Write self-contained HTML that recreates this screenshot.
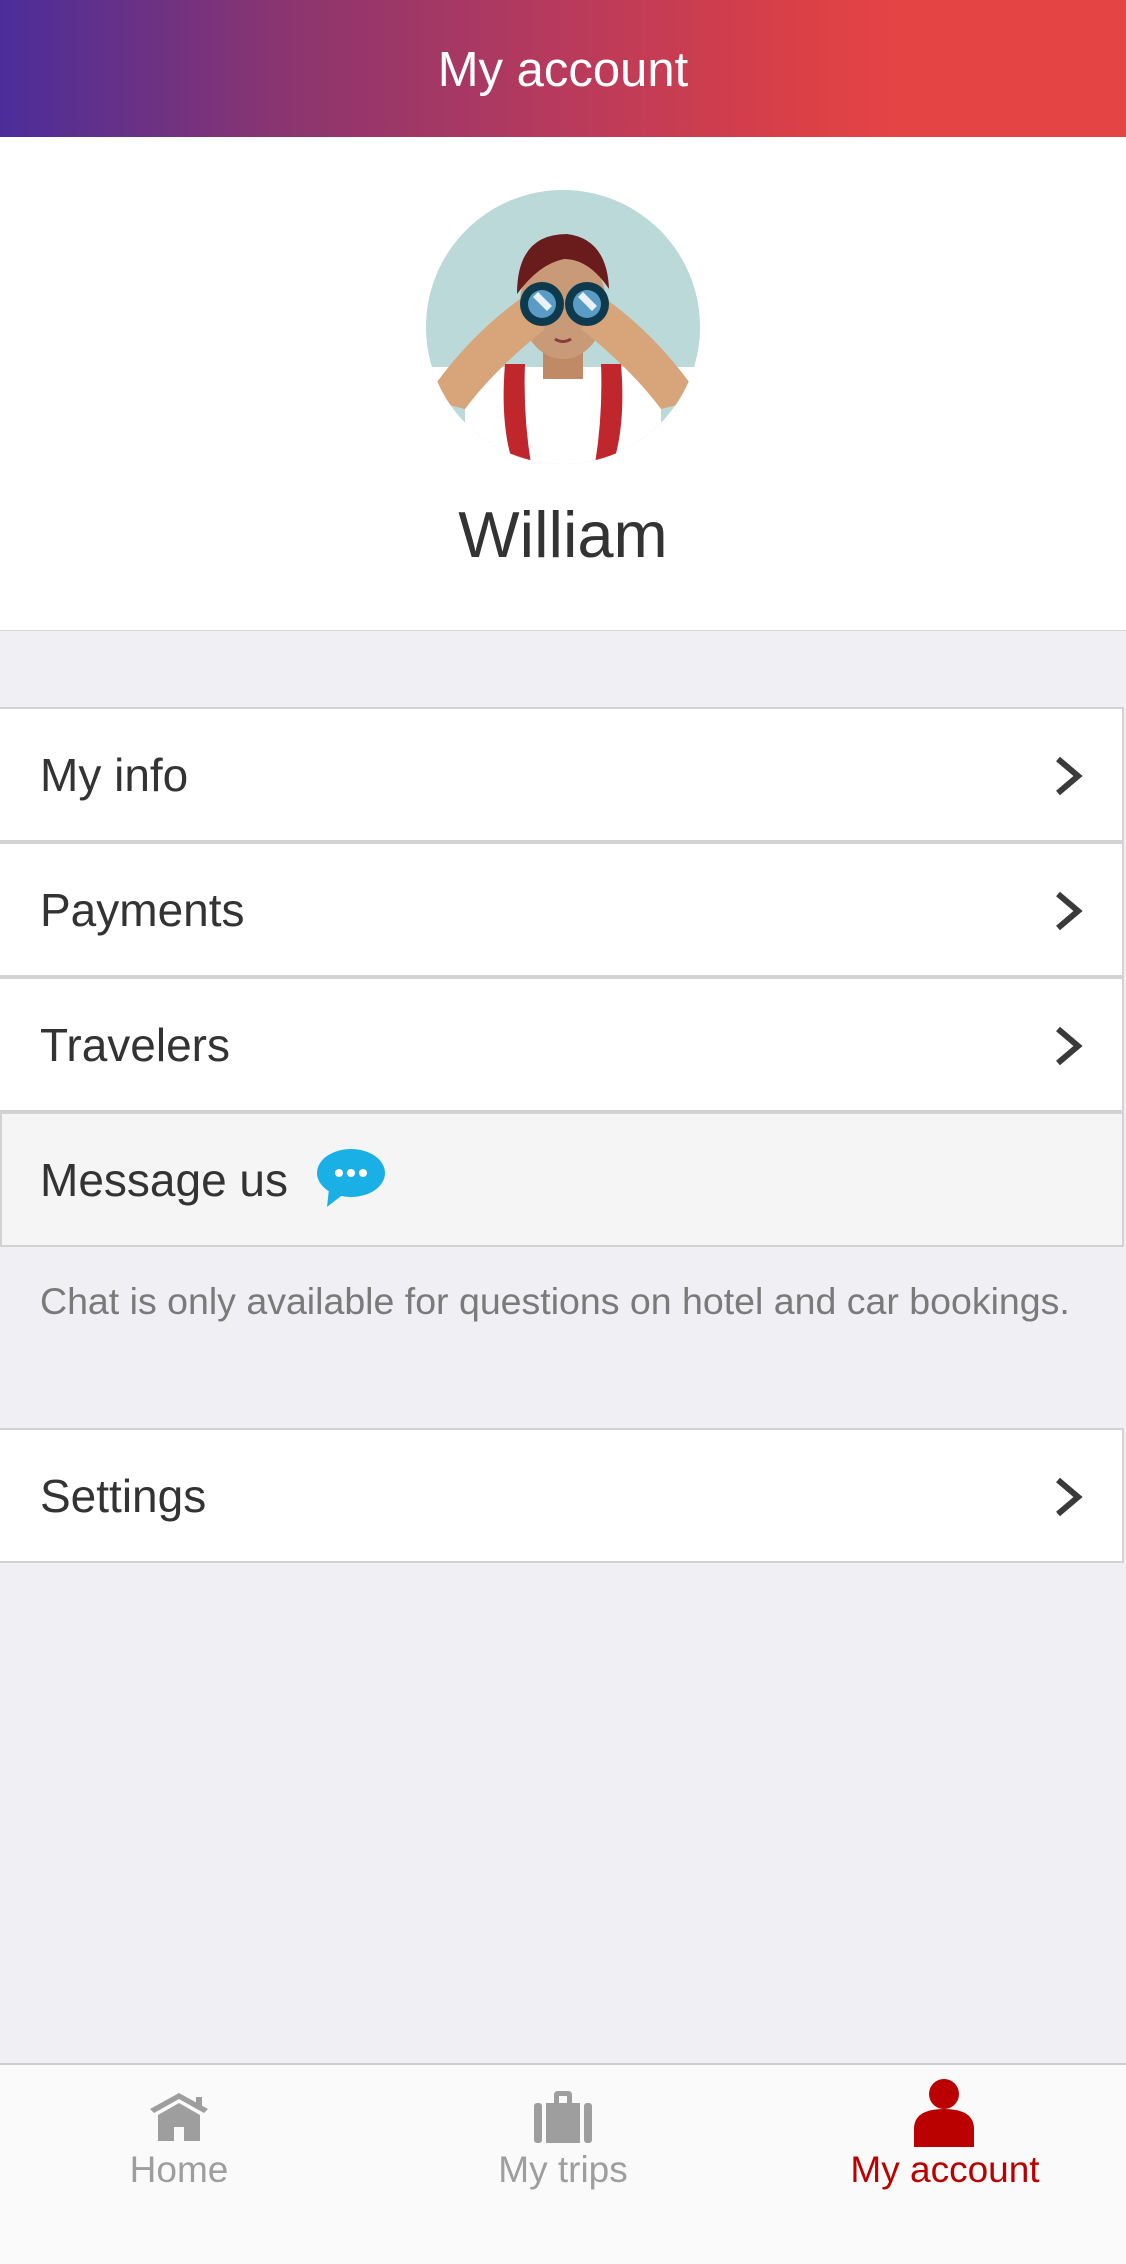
<!DOCTYPE html>
<html><head><meta charset="utf-8"><style>
*{margin:0;padding:0;box-sizing:border-box}
body{width:1126px;height:2264px;background:#efeff4;font-family:"Liberation Sans",sans-serif;position:relative;overflow:hidden}
.hdr{position:absolute;left:0;top:0;width:1126px;height:137px;background:linear-gradient(90deg,#4b2d9a 0%,#8a3570 25%,#b83a5c 50%,#d93f48 70%,#e54444 80%,#e54444 100%);color:#fff;font-size:49px;text-align:center;line-height:140px}
.prof{position:absolute;left:0;top:137px;width:1126px;height:494px;background:#fff;border-bottom:1px solid #d4d4d8}
.name{position:absolute;left:0;width:1126px;top:360px;text-align:center;font-size:65px;color:#333}
.row{position:absolute;left:0;width:1124px;height:135px;background:#fff;border:2px solid #d2d2d2;border-left:none;font-size:46px;color:#333;padding-left:40px;line-height:133px}
.chev{position:absolute;left:1054px;top:46px}
.note{position:absolute;left:40px;top:1280px;font-size:37.5px;color:#7a7a7a}
.nav{position:absolute;left:0;top:2063px;width:1126px;height:201px;background:#fafafa;border-top:2px solid #cdcdd0}
.lbl{position:absolute;top:84px;font-size:37px;color:#9e9e9e;text-align:center;width:400px}
</style></head><body>
<div class="hdr">My account</div>
<div class="prof">
<svg style="position:absolute;left:425px;top:52px" width="276" height="276" viewBox="0 0 276 276">
<defs><clipPath id="c"><circle cx="138" cy="138" r="137"/></clipPath></defs>
<circle cx="138" cy="138" r="137" fill="#bad9d8"/>
<g clip-path="url(#c)">
<rect x="0" y="178" width="276" height="100" fill="#fff"/>
<rect x="0" y="210" width="40" height="70" fill="#bad9d8"/><rect x="236" y="210" width="40" height="70" fill="#bad9d8"/>
<path d="M80 175 q-5 60 8 100 l18 0 q-8-50 -6-100z" fill="#c0272d"/>
<path d="M196 175 q5 60 -8 100 l-18 0 q8-50 6-100z" fill="#c0272d"/>
<rect x="118" y="150" width="40" height="40" fill="#c08a66"/>
<ellipse cx="138" cy="115" rx="43" ry="55" fill="#c89a78"/>
<path d="M92 105 q0-60 50-60 q40 5 42 55 q-20-30 -45-30 q-25 5-47 35z" fill="#6a1c1c"/>
<path d="M0 210 q40-60 95-100 l25 30 q-50 40 -80 80 z" fill="#d8a47a"/>
<path d="M276 210 q-40-60 -95-100 l-25 30 q50 40 80 80 z" fill="#d8a47a"/>
<circle cx="117" cy="115" r="22" fill="#0e3a4d"/><circle cx="162" cy="115" r="22" fill="#0e3a4d"/>
<circle cx="117" cy="115" r="14" fill="#5b9cc7"/><circle cx="162" cy="115" r="14" fill="#5b9cc7"/>
<path d="M108 108 l14 14 l5 -5 l-14-14z" fill="#e8f2f8"/><path d="M153 108 l14 14 l5 -5 l-14-14z" fill="#e8f2f8"/>
<path d="M130 150 q8 5 16 0" stroke="#8a3c3c" stroke-width="3" fill="none"/>
</g></svg>
<div class="name">William</div>
</div>
<div class="row" style="top:707px">My info<svg class="chev" width="30" height="42" viewBox="0 0 30 42"><path d="M4 4 L24 21 L4 38" stroke="#3a3a3a" stroke-width="6" fill="none"/></svg></div>
<div class="row" style="top:842px">Payments<svg class="chev" width="30" height="42" viewBox="0 0 30 42"><path d="M4 4 L24 21 L4 38" stroke="#3a3a3a" stroke-width="6" fill="none"/></svg></div>
<div class="row" style="top:977px">Travelers<svg class="chev" width="30" height="42" viewBox="0 0 30 42"><path d="M4 4 L24 21 L4 38" stroke="#3a3a3a" stroke-width="6" fill="none"/></svg></div>
<div class="row" style="top:1112px;background:#f5f5f5;border-left:2px solid #d2d2d2;padding-left:38px">Message us
<svg style="position:absolute;left:313px;top:35px" width="72" height="60" viewBox="0 0 72 60"><ellipse cx="36" cy="24" rx="34" ry="24" fill="#1ab0e6"/><path d="M14 40 L12 58 L30 44z" fill="#1ab0e6"/><circle cx="24" cy="24" r="4" fill="#fff"/><circle cx="36" cy="24" r="4" fill="#fff"/><circle cx="48" cy="24" r="4" fill="#fff"/></svg></div>
<div class="note">Chat is only available for questions on hotel and car bookings.</div>
<div class="row" style="top:1428px">Settings<svg class="chev" width="30" height="42" viewBox="0 0 30 42"><path d="M4 4 L24 21 L4 38" stroke="#3a3a3a" stroke-width="6" fill="none"/></svg></div>
<div class="nav">
<svg style="position:absolute;left:148px;top:26px" width="62" height="52" viewBox="0 0 62 52"><path d="M2 18 L31 2 L60 18 L56 22 L31 8 L6 22z" fill="#9e9e9e"/><path d="M10 24 L31 12 L52 24 L52 50 L36 50 L36 36 L26 36 L26 50 L10 50z" fill="#9e9e9e"/><rect x="48" y="6" width="6" height="10" fill="#9e9e9e"/></svg>
<svg style="position:absolute;left:532px;top:24px" width="62" height="56" viewBox="0 0 62 56"><path d="M22 14 V6 q0-4 4-4 h10 q4 0 4 4 V14 h-5 V7 h-8 V14z" fill="#9e9e9e"/><rect x="14" y="14" width="34" height="40" fill="#9e9e9e"/><rect x="2" y="14" width="8" height="40" rx="3" fill="#9e9e9e"/><rect x="52" y="14" width="8" height="40" rx="3" fill="#9e9e9e"/></svg>
<svg style="position:absolute;left:912px;top:14px" width="64" height="70" viewBox="0 0 64 70"><ellipse cx="32" cy="15" rx="15" ry="15" fill="#bb0000"/><path d="M2 68 V50 q0-20 30-20 q30 0 30 20 V68z" fill="#bb0000"/></svg>
<div class="lbl" style="left:-21px">Home</div>
<div class="lbl" style="left:363px">My trips</div>
<div class="lbl" style="left:745px;color:#bb0000">My account</div>
</div>
</body></html>
